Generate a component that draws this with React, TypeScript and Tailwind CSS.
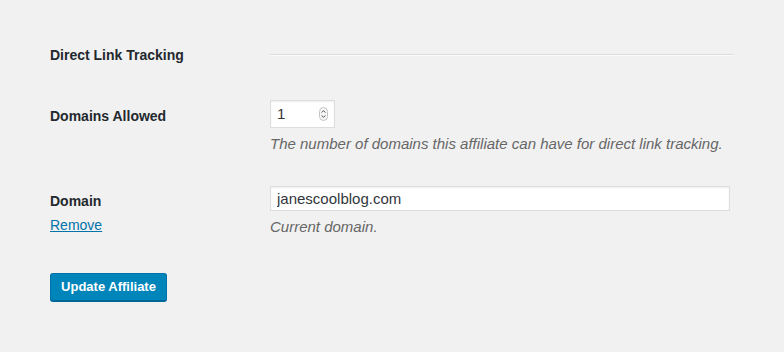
import React from "react";

const font = { fontFamily: '"Liberation Sans", Arial, sans-serif' };

function Spinner() {
  return (
    <svg width="9" height="14" viewBox="0 0 9 14" className="shrink-0">
      <rect x="0.5" y="0.5" width="8" height="13" rx="4" fill="#f7f7f7" stroke="#c4c4c4" />
      <path d="M2.6 5.6 L4.5 3.6 L6.4 5.6" fill="none" stroke="#555" strokeWidth="1" />
      <path d="M2.6 8.4 L4.5 10.4 L6.4 8.4" fill="none" stroke="#555" strokeWidth="1" />
    </svg>
  );
}

export default function App() {
  return (
    <div className="w-full h-[352px] bg-[#f1f1f1] px-[50px] pt-[45px] text-[14px] text-[#23282d]" style={font}>
      {/* Section heading row */}
      <div className="flex items-start">
        <div className="w-[220px] shrink-0 font-bold leading-[20px]">Direct Link Tracking</div>
        <div className="flex-1 pt-[9px]">
          <div className="border-t border-[#dddddd] border-b border-b-[#fafafa]" />
        </div>
      </div>

      {/* Domains allowed */}
      <div className="flex items-start mt-[35px]">
        <div className="w-[220px] shrink-0 pt-[6px] font-bold leading-[20px]">Domains Allowed</div>
        <div className="flex-1">
          <div className="w-[65px] h-[28px] bg-white border border-[#dddddd] shadow-[inset_0_1px_2px_rgba(0,0,0,0.07)] flex items-center justify-between pl-[6px] pr-[6px] text-[15px] text-[#32373c]">
            <span className="leading-[20px]">1</span>
            <Spinner />
          </div>
          <p className="mt-[6px] italic text-[15px] text-[#666666] leading-[20px]">
            The number of domains this affiliate can have for direct link tracking.
          </p>
        </div>
      </div>

      {/* Domain */}
      <div className="flex items-start mt-[32px]">
        <div className="w-[220px] shrink-0 pt-[5px] leading-[20px]">
          <div className="font-bold">Domain</div>
          <a href="#" className="block mt-[4px] text-[#0073aa] underline">Remove</a>
        </div>
        <div className="flex-1">
          <input
            readOnly
            value="janescoolblog.com"
            className="w-[460px] h-[25px] bg-white border border-[#dddddd] shadow-[inset_0_1px_2px_rgba(0,0,0,0.07)] px-[6px] text-[15px] text-[#32373c] outline-none"
            style={font}
          />
          <p className="mt-[6px] italic text-[15px] text-[#666666] leading-[20px]">Current domain.</p>
        </div>
      </div>

      <button className="mt-[36px] h-[28px] w-[117px] rounded-[3px] bg-[#0085ba] border border-[#0073aa] border-b-[#006799] shadow-[0_1px_0_#006799] text-white font-bold text-[13px] leading-[26px]">
        Update Affiliate
      </button>
    </div>
  );
}
